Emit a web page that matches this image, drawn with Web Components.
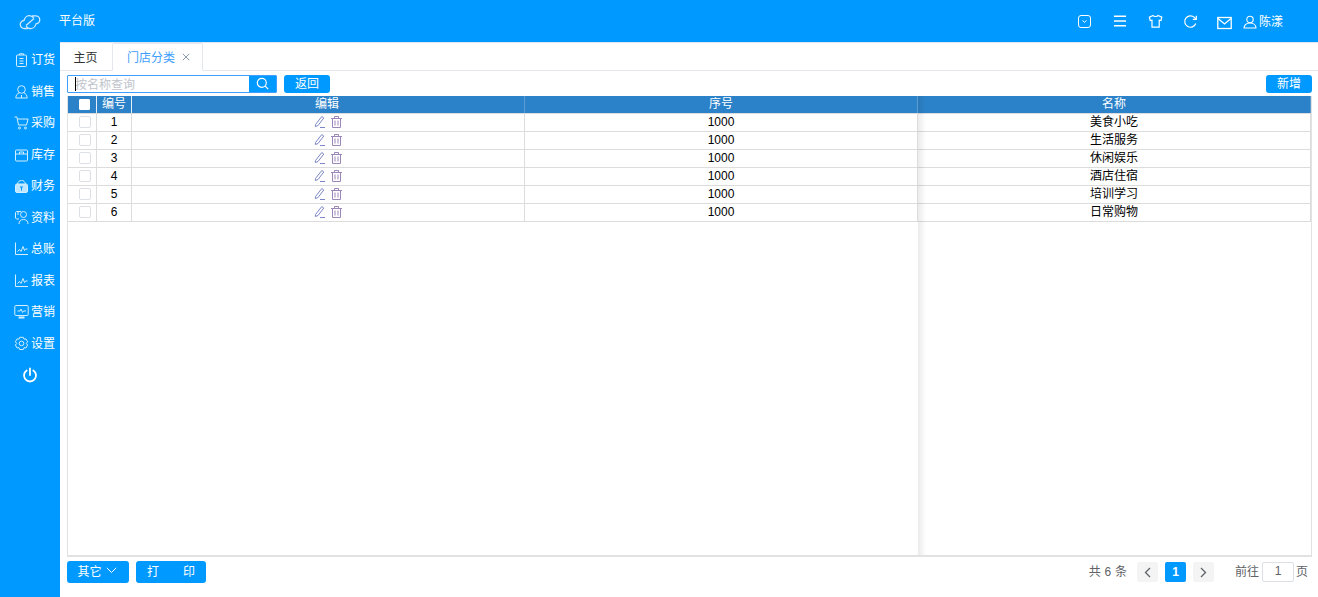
<!DOCTYPE html>
<html lang="zh"><head><meta charset="utf-8"><title>门店分类</title>
<style>
html,body{margin:0;height:100%;overflow:hidden;background:#fff}
body{font:12px "Liberation Sans","Noto Sans CJK SC",sans-serif;color:#000}
</style></head><body>
<app-shell>
  <top-bar slot="top"></top-bar>
  <side-nav slot="side">
    <nav-item icon="order"><span>订货</span></nav-item>
    <nav-item icon="sale"><span>销售</span></nav-item>
    <nav-item icon="cart"><span>采购</span></nav-item>
    <nav-item icon="box"><span>库存</span></nav-item>
    <nav-item icon="fin"><span>财务</span></nav-item>
    <nav-item icon="data"><span>资料</span></nav-item>
    <nav-item icon="chart"><span>总账</span></nav-item>
    <nav-item icon="chart"><span>报表</span></nav-item>
    <nav-item icon="screen"><span>营销</span></nav-item>
    <nav-item icon="gear"><span>设置</span></nav-item>
    <power-btn></power-btn>
  </side-nav>
  <tab-strip></tab-strip>
  <tool-bar></tool-bar>
  <data-grid></data-grid>
  <foot-bar></foot-bar>
</app-shell>
<script>
const ICONS={
 order:'<rect x="2.500" y="3" width="10" height="11.500" rx="1"/><path d="M5.500 3V1.800h4V3M5.500 6.500h4M5.500 9h4M5.500 11.500h4"/>',
 sale:'<circle cx="7.500" cy="5.500" r="3.800"/><path d="M1.800 14c0-2.800 1.600-4.600 3.500-5.200M13.200 14c0-2.800-1.600-4.600-3.500-5.200M1.800 14h11.400M7.500 11v3"/>',
 cart:'<path d="M.5 2h2.400l1.600 8h8l1.600-6H3.400"/><circle cx="5.500" cy="13" r="1"/><circle cx="11.500" cy="13" r="1"/>',
 box:'<rect x="1.500" y="3" width="12" height="11" rx="1"/><path d="M1.500 7h12M5.500 7V5M9.500 7V5M5.500 5h4"/>',
 fin:'<rect x="1.500" y="6" width="12" height="8.500" rx="1.500" fill="#bfe6ff"/><path d="M3.500 6C4 3.500 5.500 2.500 7.500 2.500s3.500 1 4 3.500"/><path d="M6 9h3M7.500 9v3.500" stroke="#09f"/>',
 data:'<circle cx="9.500" cy="4.500" r="3"/><path d="M7 1.500H2.500l-1 1V8l1 1H5M5 14c0-2.600 1.500-4.500 4.500-4.500S14 11.400 14 14M4 1.500V5"/>',
 chart:'<path d="M1.500 1.500v12H14"/><path d="M3.500 10.500l2-2 1.500 2 2-5 1.500 4 1-1.500h2"/>',
 screen:'<rect x=".8" y="1.500" width="13.400" height="10" rx="1"/><path d="M3.500 7H6l1-2 1.500 3.500 1-1.500H12"/><path d="M4.500 13.500h6" stroke-width="2"/>',
 gear:'<path d="M5.700 1.300h3.600l.7 1.900 1.900-.4 1.700 3-1.300 1.600 1.300 1.600-1.700 3-1.900-.4-.7 1.900H5.700L5 11.600l-1.900.4-1.700-3L2.700 7.400 1.400 5.800l1.700-3 1.900.4z"/><circle cx="7.500" cy="7.400" r="2.300"/>'
};
const icon=(n,s=15)=>`<svg width="${s}" height="${s}" viewBox="0 0 15 15" fill="none" stroke="currentColor" stroke-width="1" aria-hidden="true">${ICONS[n]||''}</svg>`;
function def(name,css,html){
  customElements.define(name,class extends HTMLElement{
    constructor(){super();this.attachShadow({mode:'open'});}
    connectedCallback(){
      if(this.shadowRoot.firstChild)return;
      this.shadowRoot.innerHTML=`<style>${css}</style>${typeof html==='function'?html(this):html}`;
    }
  });
}
def('app-shell',`
:host{display:grid;grid-template-columns:60px 1fr;grid-template-rows:42px 1fr;width:1318px;height:597px}
.top{grid-column:1/3}.side{background:#09f}
.main{display:flex;flex-direction:column;min-width:0}
`,`<div class="top"><slot name="top"></slot></div><div class="side"><slot name="side"></slot></div><div class="main"><slot></slot></div>`);

def('top-bar',`
:host{display:flex;align-items:center;height:42px;background:#09f;color:#fff;box-sizing:border-box}
.logo{width:59px;display:flex;justify-content:center;margin-top:2px;padding-left:1px;box-sizing:border-box}
.brand{margin-top:-4px;font-size:12px}
.r{margin-left:auto;display:flex;align-items:center;padding-right:35px}
.r svg{display:block}
.i{display:flex}
.u{display:flex;align-items:center;margin-left:11px;gap:2px;margin-top:1px}
.u span{font-size:12px;margin-top:-3px}
`,`<div class="logo"><svg width="22" height="16" viewBox="0 0 22 16" fill="none" stroke="#cdeaff" stroke-width="1.300"><path d="M9 14.500H5.500a4 4 0 0 1-.5-8C5.800 3.300 8.500 1.200 11.500 1.800c1.500.3 2.700 1.200 3.300 2.500M13 1.800h3.500a4 4 0 0 1 .5 8c-.8 3.200-3.500 5.300-6.500 4.700-1.500-.3-2.700-1.200-3.300-2.500"/><path d="M7 11.500L15 4.500"/></svg></div>
<div class="brand">平台版</div>
<div class="r">
 <span class="i" style="margin-right:21px"><svg width="15" height="15" viewBox="0 0 15 15" fill="none" stroke="#fff"><rect x="1.500" y="1.500" width="12" height="12" rx="2.500"/><path d="M5.500 6.500l2 1.800 2-1.800"/></svg></span>
 <span class="i" style="margin-right:21px"><svg width="14" height="14" viewBox="0 0 14 14" fill="none" stroke="#fff" stroke-width="1.500"><path d="M1 2.200h12M1 7h12M1 11.800h12"/></svg></span>
 <span class="i" style="margin-right:20px"><svg width="15" height="15" viewBox="0 0 15 15" fill="none" stroke="#fff" stroke-width="1.200"><path d="M5 1.500c.6 1.300 4.400 1.300 5 0l3.800 1.700-.8 3.300-1.800-.3v7H4v-7l-1.800.3-.8-3.300z"/></svg></span>
 <span class="i" style="margin-right:19px"><svg width="15" height="15" viewBox="0 0 15 15" fill="none" stroke="#fff" stroke-width="1.200"><path d="M12.800 9.500A5.700 5.700 0 1 1 11.400 3.400L13 5"/><path d="M13.300 1.800V5.300H9.800"/></svg></span>
 <span class="i" style="margin-top:3px"><svg width="15" height="14" viewBox="0 0 15 14" fill="none" stroke="#fff" stroke-width="1.300"><rect x=".8" y="1.500" width="13.400" height="11"/><path d="M1 2.500l6.500 5.500 6.500-5.500"/></svg></span>
 <div class="u"><svg width="14" height="14" viewBox="0 0 14 14" fill="none" stroke="#fff" stroke-width="1.100"><circle cx="7" cy="4.500" r="3.200"/><path d="M1 13c0-3 2.500-5 6-5s6 2 6 5z"/></svg><span>陈漾</span></div>
</div>`);

def('nav-item',`
:host{display:flex;align-items:center;height:31.500px;padding-left:15px;box-sizing:border-box;color:#fff;font-size:12px}
.ic{display:flex;width:17px;margin-left:-1px;color:#d4efff}
::slotted(span){margin-top:-2px}
`,h=>`<span class="ic">${icon(h.getAttribute('icon'))}</span><slot></slot>`);

def('side-nav',`:host{display:flex;flex-direction:column;padding-top:2px}`,`<slot></slot>`);
def('power-btn',`:host{display:flex;justify-content:center;align-items:center;height:32px}`,`<svg width="16" height="16" viewBox="0 0 16 16" fill="none" stroke="#fff" stroke-width="1.800" stroke-linecap="round"><path d="M8 1.500V8"/><path d="M4.700 3.500a6 6 0 1 0 6.600 0"/></svg>`);

def('tab-strip',`
:host{display:flex;height:29px;box-sizing:border-box;border-top:1px solid #dbe6f0;border-bottom:1px solid #e4e7ed;font-size:12px}
.t{display:flex;align-items:center;box-sizing:border-box;height:28px;padding-bottom:2px}
.h{width:53px;justify-content:center;color:#303133;padding-right:2px}
.a{width:91px;border:1px solid #e4e7ed;border-bottom:1px solid #fff;border-radius:2px 2px 0 0;color:#409eff;padding-left:14px;gap:7px;margin-left:-1px}
.x{display:flex;padding-top:2px}
`,`<div class="t h">主页</div><div class="t a">门店分类<span class="x"><svg width="8" height="8" viewBox="0 0 8 8" stroke="#8a9aae" fill="none"><path d="M.8.800l6.400 6.400M7.200.800L.8 7.200"/></svg></span></div>`);

def('blue-btn',`:host{display:inline-flex;align-items:center;justify-content:center;box-sizing:border-box;background:#09f;color:#fff;border-radius:3px;font-size:12px;padding-bottom:2px}`,`<slot></slot>`);

def('tool-bar',`
:host{display:flex;align-items:center;height:25px;padding:0 6px 0 7px;box-sizing:border-box}
.s{display:flex;width:210px;height:18px;box-sizing:border-box;border:1px solid #409eff;border-radius:1px;overflow:hidden}
.in{flex:1;display:flex;align-items:center;color:#c0c4cc;position:relative;padding-left:7px;font-size:12px}
.in::before{content:"";position:absolute;left:7px;top:1px;bottom:1px;width:1px;background:#000}
.go{width:27px;background:#09f;display:flex;align-items:center;justify-content:center}
blue-btn{height:18px}
.b{margin-left:7px;width:46px}.n{margin-left:auto;width:46px}
`,`<div class="s"><div class="in">按名称查询</div><div class="go"><svg width="13" height="13" viewBox="0 0 13 13" fill="none" stroke="#fff" stroke-width="1.200"><circle cx="5.800" cy="5.800" r="4.500"/><path d="M9.200 9.200l3 3"/></svg></div></div><blue-btn class="b">返回</blue-btn><blue-btn class="n">新增</blue-btn>`);

const ROWS=[['1','美食小吃'],['2','生活服务'],['3','休闲娱乐'],['4','酒店住宿'],['5','培训学习'],['6','日常购物']];
const pen='<svg width="12" height="13" viewBox="0 0 12 13" fill="none" stroke="#7c86c4" stroke-width="1"><path d="M1.500 9.500L7.800 1.500l2 1.500-5.800 7.500-2.700 1z"/><path d="M6 12.500h5"/></svg>';
const bin='<svg width="11" height="12" viewBox="0 0 11 12" fill="none" stroke="#9a86b8" stroke-width="1"><path d="M0 2.500h11M3.500 2.500V.5h4v2M1.500 2.500v9h8v-9M4 4.500v5M7 4.500v5"/></svg>';
def('data-grid',`
:host{display:block;flex:none;margin:0 6px 0 7px;height:461px;box-sizing:border-box;border:1px solid #e2e2e2;border-top:0;border-bottom:2px solid #e2e2e2;position:relative;overflow:hidden;font-size:12px;line-height:15px}
.r{display:grid;grid-template-columns:29px 35px 393px 393px 393px;grid-template-rows:17px;height:18px;border-bottom:1px solid #dcdcdc;box-sizing:border-box}
.r>div{display:flex;align-items:center;justify-content:center;border-right:1px solid #dcdcdc;box-sizing:border-box;padding-bottom:0;min-height:0}
.r>div:first-child{padding:0 0 1px 5px}
.hd{background:#2b82c9;color:#fff}
.hd>div{border-right:1px solid #e6eef6}
.hd>div:nth-child(n+3){border-right-color:#5b9dd3}
.hd>div:nth-child(3){padding-right:2px}
.cb{width:10px;height:10px;border:1px solid #dcdfe6;border-radius:2px;background:#fff}
.hd .cb{border-color:#fff;width:9px;height:9px;border-radius:1px}
.r>.ed{gap:5px;padding:0 1px 2px 0}
.sh{position:absolute;left:850px;top:0;bottom:0;width:8px;background:linear-gradient(90deg,rgba(0,0,0,.08),rgba(0,0,0,0));pointer-events:none}
`,`<div class="r hd"><div><span class="cb"></span></div><div>编号</div><div>编辑</div><div>序号</div><div>名称</div></div>`+
ROWS.map(([n,t])=>`<div class="r"><div><span class="cb"></span></div><div>${n}</div><div class="ed">${pen}${bin}</div><div>1000</div><div>${t}</div></div>`).join('')+`<div class="sh"></div>`);

def('foot-bar',`
:host{display:flex;align-items:center;height:30px;padding:0 10px 0 7px;color:#606266;font-size:12px;box-sizing:border-box}
blue-btn{height:22px;padding-bottom:3px}
.o{width:62px;gap:4px;padding-right:2px}.p{width:70px;margin-left:7px;gap:24px}
.tot{margin-left:auto;margin-right:10px;word-spacing:.5px;padding-bottom:4px}
.pg{width:21px;height:20px;background:#f4f4f5;border-radius:2px;display:flex;align-items:center;justify-content:center}
.cur{background:#09f;color:#fff;font-weight:700;margin:0 7px;padding-bottom:1px;box-sizing:border-box}
.go{margin-left:21px;margin-right:3px;padding-bottom:4px}
.in{width:32px;height:20px;box-sizing:border-box;border:1px solid #dcdfe6;border-radius:2px;display:flex;align-items:center;justify-content:center;color:#606266;margin-right:2px;padding-bottom:2px}
.pe{padding-bottom:4px}
`,`<blue-btn class="o">其它<svg width="11" height="7" viewBox="0 0 11 7" fill="none" stroke="#fff"><path d="M.8.800l4.700 4.700L10.200.800"/></svg></blue-btn><blue-btn class="p"><span>打</span><span>印</span></blue-btn>
<span class="tot">共 6 条</span><span class="pg"><svg width="7" height="11" viewBox="0 0 7 11" fill="none" stroke="#606266" stroke-width="1.300"><path d="M6 1L1.500 5.500 6 10"/></svg></span><span class="pg cur">1</span><span class="pg"><svg width="7" height="11" viewBox="0 0 7 11" fill="none" stroke="#606266" stroke-width="1.300"><path d="M1 1l4.500 4.500L1 10"/></svg></span><span class="go">前往</span><span class="in">1</span><span class="pe">页</span>`);
</script>
</body></html>
